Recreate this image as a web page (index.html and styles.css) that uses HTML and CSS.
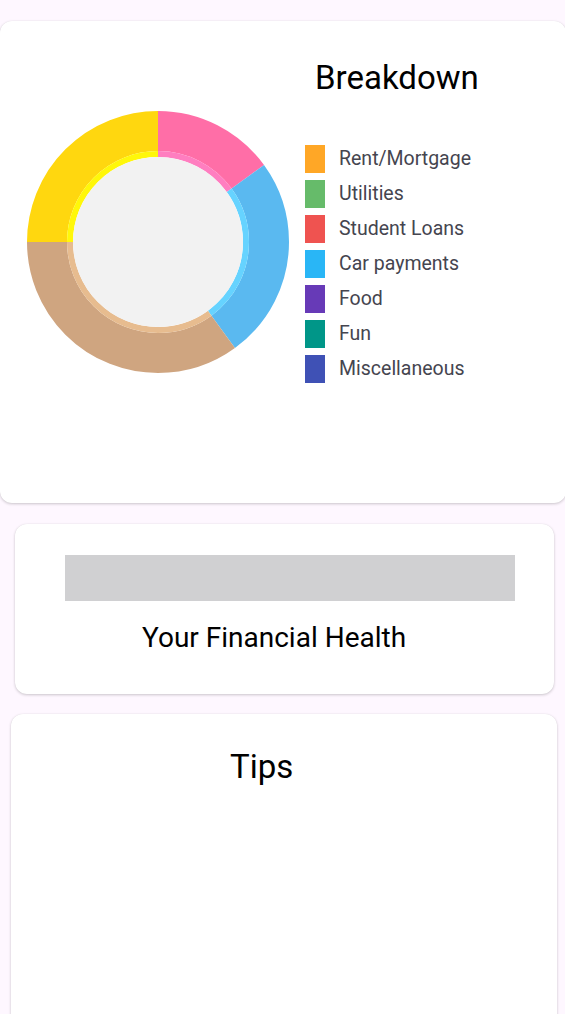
FILE: index.html
```html
<!DOCTYPE html>
<html>
<head>
<meta charset="utf-8">
<link rel="stylesheet" href="styles.css">
</head>
<body>
<div class="page">
  <section class="card breakdown">
    <div class="chart">
      <svg width="262" height="262" viewBox="0 0 262 262">
        <g transform="rotate(-90 131 131)" fill="none">
          <circle cx="131" cy="131" r="111" stroke="#FF6EA7" stroke-width="40" pathLength="360" stroke-dasharray="54 306" stroke-dashoffset="0"/>
          <circle cx="131" cy="131" r="111" stroke="#5AB9F0" stroke-width="40" pathLength="360" stroke-dasharray="90 270" stroke-dashoffset="-54"/>
          <circle cx="131" cy="131" r="111" stroke="#CFA580" stroke-width="40" pathLength="360" stroke-dasharray="126 234" stroke-dashoffset="-144"/>
          <circle cx="131" cy="131" r="111" stroke="#FFD70F" stroke-width="40" pathLength="360" stroke-dasharray="90 270" stroke-dashoffset="-270"/>
          <circle cx="131" cy="131" r="88" stroke="#FF7EC0" stroke-width="6" pathLength="360" stroke-dasharray="54 306" stroke-dashoffset="0"/>
          <circle cx="131" cy="131" r="88" stroke="#66D3FF" stroke-width="6" pathLength="360" stroke-dasharray="90 270" stroke-dashoffset="-54"/>
          <circle cx="131" cy="131" r="88" stroke="#E7BC8F" stroke-width="6" pathLength="360" stroke-dasharray="126 234" stroke-dashoffset="-144"/>
          <circle cx="131" cy="131" r="88" stroke="#FFF70A" stroke-width="6" pathLength="360" stroke-dasharray="90 270" stroke-dashoffset="-270"/>
        </g>
        <circle cx="131" cy="131" r="85" fill="#F2F2F2"/>
      </svg>
    </div>
    <div class="side">
      <h2 class="title">Breakdown</h2>
      <ul class="legend">
        <li><span class="swatch c-rent"></span>Rent/Mortgage</li>
        <li><span class="swatch c-util"></span>Utilities</li>
        <li><span class="swatch c-loan"></span>Student Loans</li>
        <li><span class="swatch c-car"></span>Car payments</li>
        <li><span class="swatch c-food"></span>Food</li>
        <li><span class="swatch c-fun"></span>Fun</li>
        <li><span class="swatch c-misc"></span>Miscellaneous</li>
      </ul>
    </div>
  </section>

  <section class="card health">
    <div class="bar"></div>
    <p class="health-label">Your Financial Health</p>
  </section>

  <section class="card tips">
    <h2 class="tips-title">Tips</h2>
  </section>
</div>
</body>
</html>
```

FILE: styles.css
```css
html, body {
  margin: 0;
  padding: 0;
  background: #FEF7FF;
  font-family: Roboto, "Noto Sans", sans-serif;
  overflow: hidden;
}

.page {
  padding-top: 21px;
  display: flex;
  flex-direction: column;
  align-items: flex-start;
  height: 1014px;
  box-sizing: border-box;
  overflow: hidden;
}

.card {
  background: #FFFFFF;
  border-radius: 12px;
  box-shadow: 0 1px 3px rgba(0, 0, 0, 0.2), 0 0 1px rgba(0, 0, 0, 0.08);
  box-sizing: border-box;
  flex: none;
}

.breakdown {
  width: 566px;
  height: 482px;
  display: flex;
  padding-left: 27px;
}

.chart {
  margin-top: 90px;
  width: 262px;
  height: 262px;
}

.chart svg {
  display: block;
}

.side {
  margin-left: 16px;
  padding-top: 37px;
}

.title {
  margin: 0 0 0 10px;
  font-size: 33px;
  font-weight: 400;
  color: #000000;
  line-height: normal;
}

.legend {
  list-style: none;
  margin: 47px 0 0 0;
  padding: 0;
  display: flex;
  flex-direction: column;
  gap: 7px;
}

.legend li {
  display: flex;
  align-items: center;
  gap: 14px;
  font-size: 19.5px;
  color: #45454F;
  height: 28px;
}

.label {
  padding-top: 1px;
}

.swatch {
  width: 20px;
  height: 28px;
  flex: none;
  margin-bottom: -2px;
}

.c-rent { background: #FFA726; }
.c-util { background: #66BB6A; }
.c-loan { background: #EF5350; }
.c-car  { background: #29B6F6; }
.c-food { background: #673AB7; }
.c-fun  { background: #009688; }
.c-misc { background: #3F51B5; }

.health {
  margin-top: 21px;
  margin-left: 15px;
  width: 539px;
  height: 170px;
  padding-top: 31px;
}

.bar {
  margin-left: 50px;
  width: 450px;
  height: 46px;
  background: #D0D0D2;
}

.health-label {
  margin: 20px 0 0 127px;
  font-size: 28px;
  color: #000000;
  line-height: normal;
}

.tips {
  margin-top: 20px;
  margin-left: 11px;
  width: 546px;
  height: 400px;
  padding-top: 33px;
}

.tips-title {
  margin: 0 0 0 219px;
  font-size: 33px;
  font-weight: 400;
  color: #000000;
  line-height: normal;
}
```
